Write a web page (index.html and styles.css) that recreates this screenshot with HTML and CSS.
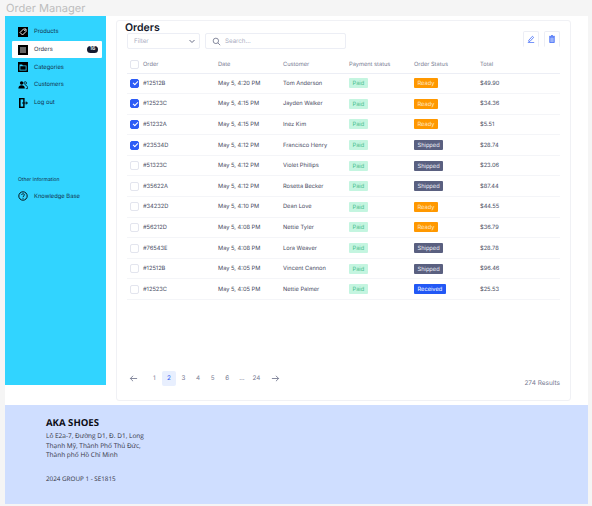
FILE: index.html
```html
<!DOCTYPE html>
<html lang="en">
<head>
    <meta charset="UTF-8">
    <meta name="viewport" content="width=device-width, initial-scale=1.0">
    <title>Order Manager</title>
    <link rel="stylesheet" href="styles.css">
</head>
<body>
    <h1 class="app-title">Order Manager</h1>

    <div class="app">
        <aside class="sidebar">
            <nav class="nav">
                <a class="nav-item">
                    <svg class="nav-icon" viewBox="0 0 10 10"><rect width="10" height="10" fill="#000"/><path d="M2 5.5 5.5 2H8v2.5L4.5 8z" fill="none" stroke="#fff" stroke-width=".9"/><circle cx="6.6" cy="3.4" r=".5" fill="#fff"/></svg>
                    Products
                </a>
                <a class="nav-item active">
                    <svg class="nav-icon" viewBox="0 0 10 10"><rect width="10" height="10" fill="#000"/><path d="M2 3h6M2 5h6M2 7h6" stroke="#fff" stroke-width=".8"/></svg>
                    Orders
                    <span class="nav-count">16</span>
                </a>
                <a class="nav-item">
                    <svg class="nav-icon" viewBox="0 0 10 10"><rect width="10" height="10" fill="#000"/><path d="M1.5 2.5h2.6l.8 1h3.6v5h-7z" fill="#31d4ff"/><path d="M2.3 4.2h5.4v3.5H2.3z" fill="#000"/></svg>
                    Categories
                </a>
                <a class="nav-item">
                    <svg class="nav-icon" viewBox="0 0 10 10"><circle cx="3.6" cy="3" r="1.7" fill="#000"/><path d="M.4 8.6c0-2.4 1.3-3.4 3.2-3.4s3.2 1 3.2 3.4z" fill="#000"/><circle cx="7.2" cy="3" r="1.3" fill="none" stroke="#000" stroke-width=".7"/><path d="M7.4 5.3c1.4 0 2.2 1 2.2 3.3H7.8" fill="none" stroke="#000" stroke-width=".7"/></svg>
                    Customers
                </a>
                <a class="nav-item">
                    <svg class="nav-icon" viewBox="0 0 10 10"><path d="M1 0h5.6v10H1z" fill="#000"/><path d="M2.6 1.4h2.6v7.2H2.6z" fill="#31d4ff"/><path d="M4 5h5.4M7.8 3.6 9.4 5 7.8 6.4" fill="none" stroke="#000" stroke-width=".9"/></svg>
                    Log out
                </a>
            </nav>

            <p class="nav-heading">Other Information</p>
            <a class="nav-item">
                <svg class="nav-icon" viewBox="0 0 10 10"><circle cx="5" cy="5" r="4.2" fill="none" stroke="#000" stroke-width=".9"/><path d="M3.7 4c0-1.7 2.7-1.7 2.7-.1 0 1-1.4 1-1.4 2.2" fill="none" stroke="#000" stroke-width=".8"/><circle cx="5" cy="7.3" r=".5" fill="#000"/></svg>
                Knowledge Base
            </a>
        </aside>

        <main class="main">
            <section class="card">
                <div class="card-top">
                    <div>
                        <h2 class="card-title">Orders</h2>
                        <div class="filters">
                            <div class="filter">
                                Filter
                                <svg class="chevron" viewBox="0 0 8 8"><path d="M1.5 3 4 5.5 6.5 3" fill="none" stroke="#6b7088" stroke-width="1"/></svg>
                            </div>
                            <div class="search">
                                <svg class="search-icon" viewBox="0 0 10 10"><circle cx="4.3" cy="4.3" r="3" fill="none" stroke="#6b7088" stroke-width=".9"/><path d="m6.5 6.5 2.6 2.6" stroke="#6b7088" stroke-width=".9"/></svg>
                                Search...
                            </div>
                        </div>
                    </div>
                    <div class="actions">
                        <button class="action-btn">
                            <svg viewBox="0 0 10 10"><path d="M2.2 6.6 6.8 1.6l1.5 1.4-4.6 5H2.2z" fill="none" stroke="#2d5cf6" stroke-width=".9"/><path d="M1 9.5h8" stroke="#2d5cf6" stroke-width=".9"/></svg>
                        </button>
                        <button class="action-btn">
                            <svg viewBox="0 0 10 10"><path d="M2.2 2.6h5.6v6.9H2.2z" fill="#9db4fa" stroke="#2d5cf6" stroke-width=".9"/><path d="M1.3 1.7h7.4M3.8.6h2.4" stroke="#2d5cf6" stroke-width=".9"/></svg>
                        </button>
                    </div>
                </div>

                <table class="orders">
                    <thead>
                        <tr>
                            <th class="col-check"><span class="check"></span></th>
                            <th class="col-order">Order</th>
                            <th class="col-date">Date</th>
                            <th class="col-customer">Customer</th>
                            <th class="col-payment">Payment status</th>
                            <th class="col-status">Order Status</th>
                            <th>Total</th>
                        </tr>
                    </thead>
                    <tbody>
                        <tr><td><span class="check checked"></span></td><td>#12512B</td><td>May 5, 4:20 PM</td><td>Tom Anderson</td><td><span class="paid">Paid</span></td><td><span class="status ready">Ready</span></td><td>$49.90</td></tr>
                        <tr><td><span class="check checked"></span></td><td>#12523C</td><td>May 5, 4:15 PM</td><td>Jayden Walker</td><td><span class="paid">Paid</span></td><td><span class="status ready">Ready</span></td><td>$34.36</td></tr>
                        <tr><td><span class="check checked"></span></td><td>#51232A</td><td>May 5, 4:15 PM</td><td>Inez Kim</td><td><span class="paid">Paid</span></td><td><span class="status ready">Ready</span></td><td>$5.51</td></tr>
                        <tr><td><span class="check checked"></span></td><td>#23534D</td><td>May 5, 4:12 PM</td><td>Francisco Henry</td><td><span class="paid">Paid</span></td><td><span class="status shipped">Shipped</span></td><td>$28.74</td></tr>
                        <tr><td><span class="check"></span></td><td>#51323C</td><td>May 5, 4:12 PM</td><td>Violet Phillips</td><td><span class="paid">Paid</span></td><td><span class="status shipped">Shipped</span></td><td>$23.06</td></tr>
                        <tr><td><span class="check"></span></td><td>#35622A</td><td>May 5, 4:12 PM</td><td>Rosetta Becker</td><td><span class="paid">Paid</span></td><td><span class="status shipped">Shipped</span></td><td>$87.44</td></tr>
                        <tr><td><span class="check"></span></td><td>#34232D</td><td>May 5, 4:10 PM</td><td>Dean Love</td><td><span class="paid">Paid</span></td><td><span class="status ready">Ready</span></td><td>$44.55</td></tr>
                        <tr><td><span class="check"></span></td><td>#56212D</td><td>May 5, 4:08 PM</td><td>Nettie Tyler</td><td><span class="paid">Paid</span></td><td><span class="status ready">Ready</span></td><td>$36.79</td></tr>
                        <tr><td><span class="check"></span></td><td>#76543E</td><td>May 5, 4:08 PM</td><td>Lora Weaver</td><td><span class="paid">Paid</span></td><td><span class="status shipped">Shipped</span></td><td>$28.78</td></tr>
                        <tr><td><span class="check"></span></td><td>#12512B</td><td>May 5, 4:05 PM</td><td>Vincent Cannon</td><td><span class="paid">Paid</span></td><td><span class="status shipped">Shipped</span></td><td>$96.46</td></tr>
                        <tr><td><span class="check"></span></td><td>#12523C</td><td>May 5, 4:05 PM</td><td>Nettie Palmer</td><td><span class="paid">Paid</span></td><td><span class="status received">Received</span></td><td>$25.53</td></tr>
                    </tbody>
                </table>

                <div class="pager">
                    <div class="pages">
                        <svg class="arrow arrow-prev" viewBox="0 0 10 10"><path d="M9 5H1.5M4.5 2 1.5 5l3 3" fill="none" stroke="#6b7088" stroke-width=".9"/></svg>
                        <span class="page">1</span>
                        <span class="page current">2</span>
                        <span class="page">3</span>
                        <span class="page">4</span>
                        <span class="page">5</span>
                        <span class="page">6</span>
                        <span class="page">...</span>
                        <span class="page">24</span>
                        <svg class="arrow arrow-next" viewBox="0 0 10 10"><path d="M1 5h7.5M5.5 2l3 3-3 3" fill="none" stroke="#6b7088" stroke-width=".9"/></svg>
                    </div>
                    <span class="results">274 Results</span>
                </div>
            </section>
        </main>
    </div>

    <footer class="footer">
        <h3 class="brand">AKA SHOES</h3>
        <p class="address">Lô E2a-7, Đường D1, Đ. D1, Long<br>Thạnh Mỹ, Thành Phố Thủ Đức,<br>Thành phố Hồ Chí Minh</p>
        <p class="credit">2024 GROUP 1 - SE1815</p>
    </footer>
</body>
</html>
```
FILE: styles.css
```css
* {
    box-sizing: border-box;
}

html, body {
    height: 506px;
    overflow: hidden;
}

body {
    margin: 0;
    padding: 0 4px 2px 5px;
    background-color: #f5f5f5;
    font-family: Inter, sans-serif;
    color: #464a5e;
    text-rendering: geometricPrecision;
}

.app-title {
    margin: 0;
    height: 16px;
    padding-left: 1px;
    font-size: 11.1px;
    line-height: 16px;
    font-weight: 400;
    color: #bdbdbd;
}

.app {
    display: flex;
    height: 389px;
    background-color: #fff;
}

/* sidebar */
.sidebar {
    width: 101px;
    height: 369px;
    padding: 7px 4px 0 7px;
    background-color: #31d4ff;
    color: #12304a;
}

.nav-item {
    display: flex;
    align-items: center;
    gap: 6px;
    height: 17.7px;
    padding-left: 6px;
    font-size: 5.8px;
    border-radius: 1px;
}

.nav-item.active {
    background-color: #fff;
    color: #2b2f45;
}

.nav-icon {
    width: 10px;
    height: 10px;
    flex-shrink: 0;
}

.nav-count {
    margin-left: auto;
    margin-right: 4px;
    width: 11px;
    height: 7px;
    border-radius: 4px;
    background-color: #15192e;
    color: #fff;
    font-size: 5.4px;
    font-weight: 500;
    line-height: 7px;
    text-align: center;
}

.nav-heading {
    margin: 65px 0 3px 6px;
    font-size: 5px;
    line-height: 8px;
}

/* main card */
.main {
    flex: 1;
    padding: 4px 17px 4px 10px;
}

.card {
    display: flex;
    flex-direction: column;
    height: 381px;
    padding: 0 10px;
    border: 1px solid #f0f1f5;
    border-radius: 3px;
}

.card-top {
    display: flex;
    justify-content: space-between;
    height: 35px;
}

.card-title {
    margin: 0 0 -1px -2px;
    font-size: 10.5px;
    line-height: 13px;
    font-weight: 600;
    color: #14182b;
}

.filters {
    display: flex;
    gap: 5px;
}

.filter, .search {
    display: flex;
    align-items: center;
    height: 16px;
    border: 1px solid #eceef5;
    border-radius: 2px;
    font-size: 6.2px;
    color: #a9adc2;
}

.filter {
    justify-content: space-between;
    width: 73px;
    padding: 0 3px 0 6px;
}

.chevron {
    width: 8px;
    height: 8px;
}

.search {
    gap: 4px;
    width: 141px;
    padding-left: 6px;
}

.search-icon {
    width: 9px;
    height: 9px;
}

.actions {
    display: flex;
    gap: 5px;
    padding-top: 10px;
}

.action-btn {
    width: 16px;
    height: 16px;
    padding: 3px;
    border: 1px solid #eceef5;
    border-bottom-color: transparent;
    border-radius: 2px 2px 0 0;
    background: none;
}

.action-btn svg {
    display: block;
    width: 8px;
    height: 8px;
    margin: 0 auto;
}

/* table */
.orders {
    width: 433px;
    border-collapse: collapse;
    table-layout: fixed;
    font-size: 5.7px;
}

.orders th {
    height: 17px;
    padding: 0;
    border-bottom: 1px solid #eceef5;
    text-align: left;
    font-weight: 400;
    color: #777b92;
}

.orders td {
    height: 20.6px;
    padding: 0;
    border-bottom: 1px solid #f4f5f8;
}

.col-check { width: 16px; }
.col-order { width: 75px; }
.col-date { width: 65px; }
.col-customer { width: 66px; }
.col-payment { width: 65px; }
.col-status { width: 66px; }

.check {
    display: block;
    width: 9px;
    height: 9px;
    margin-left: 3px;
    border: 1px solid #e3e5ee;
    border-radius: 2px;
    background-color: #fff;
}

.check.checked {
    border-color: #2d5cf6;
    background-color: #2d5cf6;
    position: relative;
}

.check.checked::after {
    content: "";
    position: absolute;
    left: 1.5px;
    top: 1.5px;
    width: 4px;
    height: 2px;
    border-left: 1px solid #fff;
    border-bottom: 1px solid #fff;
    transform: rotate(-45deg);
}

.paid, .status {
    display: inline-block;
    height: 10px;
    padding: 1px 3.5px 0;
    border-radius: 1px;
    font-size: 5.7px;
    line-height: 9px;
    vertical-align: middle;
}

.paid {
    background-color: #c4f5e0;
    color: #45bd8c;
}

.status {
    color: #fff;
}

.ready {
    background-color: #ff9800;
    color: #ffe9c8;
}

.shipped {
    background-color: #5a6080;
    color: #eceef5;
}

.received {
    background-color: #2258f5;
}

/* pager */
.pager {
    display: flex;
    justify-content: space-between;
    align-items: flex-end;
    margin-top: auto;
    margin-bottom: 14px;
    font-size: 6.3px;
    color: #777b92;
}

.pages {
    display: flex;
    align-items: center;
    padding-left: 2px;
}

.arrow {
    width: 9px;
    height: 9px;
}

.arrow-prev {
    margin-right: 9px;
}

.arrow-next {
    margin-left: 7px;
}

.page {
    width: 14.6px;
    height: 15px;
    line-height: 15px;
    text-align: center;
    border-radius: 2px;
}

.page.current {
    background-color: #e8effe;
    color: #2d5cf6;
}

.results {
    margin-bottom: -1px;
    font-size: 6.5px;
}

/* footer */
.footer {
    height: 99px;
    padding: 11px 41px;
    background-color: #cfdeff;
    color: #33333f;
    font-family: "Open Sans", sans-serif;
}

.brand {
    margin: 0;
    font-size: 9.6px;
    line-height: 13px;
    font-weight: 700;
    color: #0c0c14;
}

.address {
    margin: 2px 0 0;
    font-size: 6.5px;
    line-height: 9.6px;
}

.credit {
    margin: 14px 0 0;
    font-size: 6.3px;
    line-height: 10px;
}
```
